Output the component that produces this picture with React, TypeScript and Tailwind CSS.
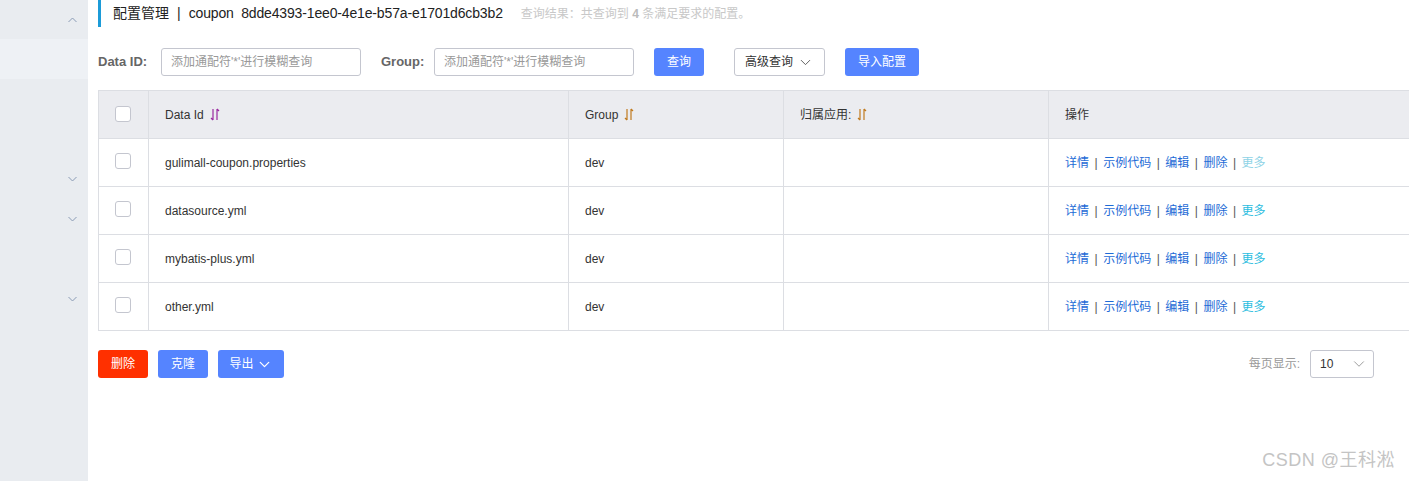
import { ChevronDown } from "lucide-react";

const rows = [
  { id: "gulimall-coupon.properties", group: "dev" },
  { id: "datasource.yml", group: "dev" },
  { id: "mybatis-plus.yml", group: "dev" },
  { id: "other.yml", group: "dev" },
];

const SortIcon = ({ color }: { color: string }) => (
  <svg width="10" height="13" viewBox="0 0 10 13" className="ml-[6px]" fill="none" stroke={color} strokeWidth="1.2">
    <path d="M3 1v11M1 10l2 2" />
    <path d="M7 12V1M7 1l2 2" />
  </svg>
);

const SideChevron = ({ up }: { up?: boolean }) => (
  <svg width="9" height="6" viewBox="0 0 9 6" fill="none" stroke="#8a9bb5" strokeWidth="1">
    {up ? <path d="M0.5 5L4.5 1L8.5 5" /> : <path d="M0.5 1L4.5 5L8.5 1" />}
  </svg>
);

const Checkbox = () => (
  <span className="block w-4 h-4 rounded-[3px] border border-[#c4c6cf] bg-white" />
);

const Sidebar = () => (
  <aside className="w-[88px] shrink-0 bg-[#e9ecf0] flex flex-col">
    <div className="h-[39px] flex items-center justify-end pr-[11px]">
      <SideChevron up />
    </div>
    <div className="h-[40px] bg-[#eef1f5]" />
    <div className="h-[80px]" />
    <div className="h-[40px] flex items-center justify-end pr-[11px]">
      <SideChevron />
    </div>
    <div className="h-[40px] flex items-center justify-end pr-[11px]">
      <SideChevron />
    </div>
    <div className="h-[40px]" />
    <div className="h-[40px] flex items-center justify-end pr-[11px]">
      <SideChevron />
    </div>
    <div className="flex-1" />
  </aside>
);

const Sep = () => <span className="mx-[5.5px] text-[#555]">|</span>;

const Actions = ({ first }: { first?: boolean }) => (
  <div className="flex items-center text-[12px] text-[#1e6bd6]">
    <span>详情</span>
    <Sep />
    <span>示例代码</span>
    <Sep />
    <span>编辑</span>
    <Sep />
    <span>删除</span>
    <Sep />
    <span className={first ? "text-[#8fd3e6]" : "text-[#2cbde0]"}>更多</span>
  </div>
);

export default function App() {
  return (
    <div
      className="flex w-[1409px] h-[481px] overflow-hidden bg-white text-[#333] relative"
      style={{ fontFamily: '"Liberation Sans", "Noto Sans CJK SC", sans-serif' }}
    >
      <Sidebar />
      <main className="flex-1 pl-[10px] flex flex-col min-w-0">
        {/* title */}
        <div className="h-[27px] flex items-center border-l-[3px] border-[#1c9bd8] pl-[12px]">
          <span className="text-[14px] text-[#222]">配置管理</span>
          <span className="text-[14px] text-[#222] mx-[8px]">|</span>
          <span className="text-[14px] text-[#222] tracking-[-0.15px]">coupon&nbsp;&nbsp;8dde4393-1ee0-4e1e-b57a-e1701d6cb3b2</span>
          <span className="text-[12px] text-[#c8c8c8] ml-[18px]">
            查询结果：共查询到 <b className="text-[#bbb]">4</b> 条满足要求的配置。
          </span>
        </div>

        {/* filters */}
        <div className="mt-[21px] h-[28px] flex items-center">
          <span className="text-[13px] font-bold text-[#666] w-[63px]">Data ID:</span>
          <div className="w-[200px] h-[28px] border border-[#c4c6cf] rounded-[3px] flex items-center px-[9px] text-[12px] text-[#999]">
            添加通配符'*'进行模糊查询
          </div>
          <span className="text-[13px] font-bold text-[#666] ml-[20px] w-[53px]">Group:</span>
          <div className="w-[200px] h-[28px] border border-[#c4c6cf] rounded-[3px] flex items-center px-[9px] text-[12px] text-[#999]">
            添加通配符'*'进行模糊查询
          </div>
          <button className="ml-[20px] w-[50px] h-[28px] rounded-[3px] bg-[#5584ff] text-white text-[12px]">查询</button>
          <button className="ml-[30px] w-[91px] h-[28px] rounded-[3px] border border-[#c4c6cf] bg-white text-[12px] text-[#333] flex items-center justify-center gap-[4px]">
            高级查询
            <ChevronDown size={17} strokeWidth={1.3} className="text-[#555]" />
          </button>
          <button className="ml-[20px] w-[74px] h-[28px] rounded-[3px] bg-[#5584ff] text-white text-[12px]">导入配置</button>
        </div>

        {/* table */}
        <div className="mt-[14px] w-[1340px] border-t border-l border-[#dcdee3] text-[12px]">
          <div className="flex h-[48px] bg-[#ebecf0] border-b border-[#dcdee3]">
            <div className="w-[50px] border-r border-[#dcdee3] flex items-center justify-center pr-[2px] pb-[2px]">
              <Checkbox />
            </div>
            <div className="w-[420px] border-r border-[#dcdee3] flex items-center pl-[16px]">
              Data Id <SortIcon color="#9a2aa0" />
            </div>
            <div className="w-[215px] border-r border-[#dcdee3] flex items-center pl-[16px]">
              Group <SortIcon color="#c07a1e" />
            </div>
            <div className="w-[265px] border-r border-[#dcdee3] flex items-center pl-[16px]">
              归属应用: <SortIcon color="#c07a1e" />
            </div>
            <div className="flex-1 flex items-center pl-[16px]">操作</div>
          </div>
          {rows.map((r, i) => (
            <div key={r.id} className="flex h-[48px] border-b border-[#dcdee3]">
              <div className="w-[50px] border-r border-[#dcdee3] flex items-center justify-center pr-[2px] pb-[4px]">
                <Checkbox />
              </div>
              <div className="w-[420px] border-r border-[#dcdee3] flex items-center pl-[16px]">{r.id}</div>
              <div className="w-[215px] border-r border-[#dcdee3] flex items-center pl-[16px]">{r.group}</div>
              <div className="w-[265px] border-r border-[#dcdee3]" />
              <div className="flex-1 flex items-center pl-[16px]">
                <Actions first={i === 0} />
              </div>
            </div>
          ))}
        </div>

        {/* footer */}
        <div className="mt-[19px] h-[28px] flex items-center pr-[35px]">
          <button className="w-[50px] h-[28px] rounded-[3px] bg-[#ff3000] text-white text-[12px]">删除</button>
          <button className="ml-[10px] w-[50px] h-[28px] rounded-[3px] bg-[#5584ff] text-white text-[12px]">克隆</button>
          <button className="ml-[10px] w-[66px] h-[28px] rounded-[3px] bg-[#5584ff] text-white text-[12px] flex items-center justify-center gap-[2px]">
            导出
            <ChevronDown size={17} strokeWidth={1.8} />
          </button>
          <div className="flex-1" />
          <span className="text-[12px] text-[#999] mr-[10px]">每页显示:</span>
          <div className="w-[64px] h-[28px] border border-[#c4c6cf] rounded-[3px] flex items-center justify-between pl-[9px] pr-[5px] text-[12px] text-[#333]">
            10
            <ChevronDown size={18} strokeWidth={1.1} className="text-[#888]" />
          </div>
        </div>
      </main>

      {/* watermark */}
      <div className="absolute right-[14px] bottom-[7px] text-[18px] text-[#c4c4c4] tracking-[0.5px]">
        CSDN @王科淞
      </div>
    </div>
  );
}
